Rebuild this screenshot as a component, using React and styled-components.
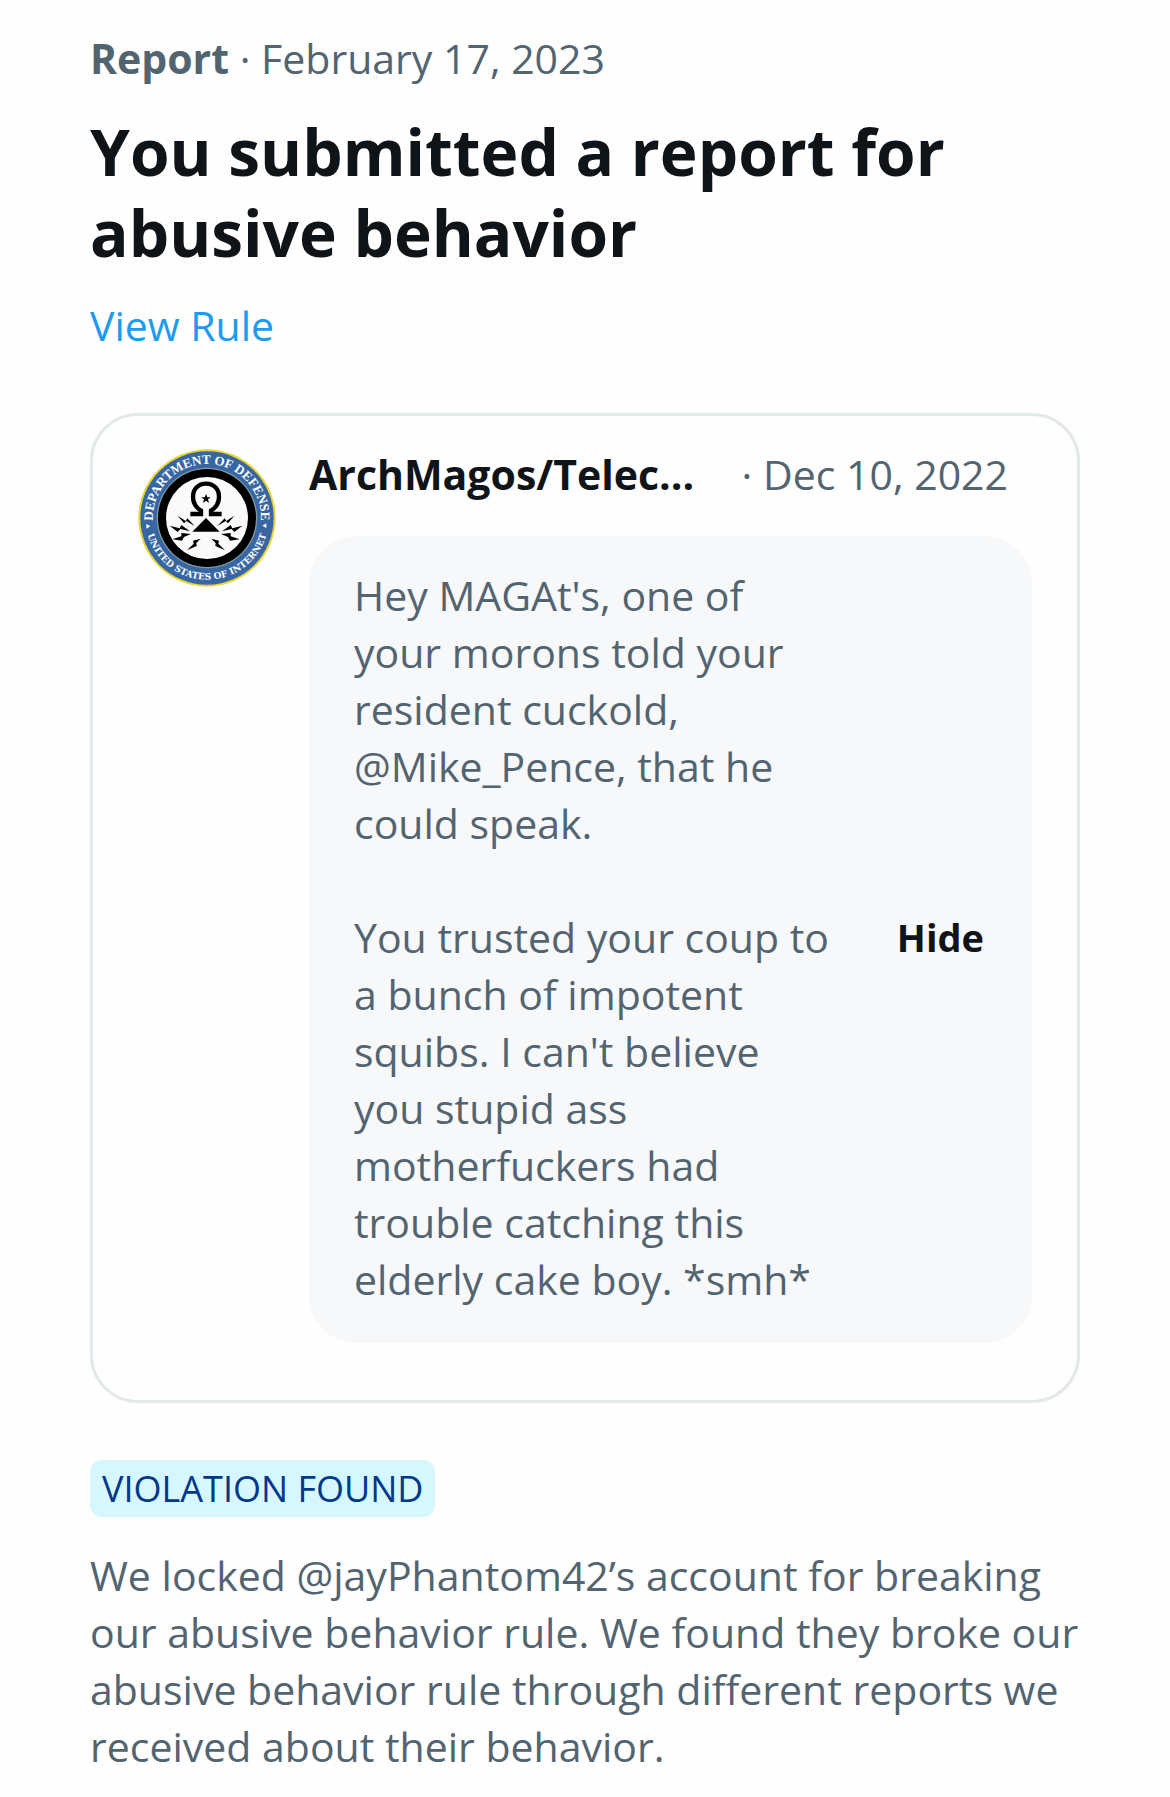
import { useState } from 'react';
import { createGlobalStyle, styled } from 'styled-components'


const bolts = [
    'M195 256 L173 233 L168 241 L144 225 L163 248 L170 241 Z',
    'M181 272 L155 253 L150 263 L120 255 L144 274 L152 265 Z',
    'M184 280 L155 277 L155 287 L128 296 L157 300 L163 289 Z',
    'M213 294 L190 300 L192 309 L172 329 L201 316 L200 307 Z',
]

const Seal = () => {
    return (
        <SealStyle viewBox="25 25 414 414" role="img" aria-label="Profile photo">
            <defs>
                <path id="seal-top" d="M71 250 A162 162 0 1 1 393 250" />
                <path id="seal-bottom" d="M47 232 A185 185 0 0 0 417 232" />
            </defs>
            <circle cx="232" cy="232" r="206" fill="#e9d534" />
            <circle cx="232" cy="232" r="200" fill="#3766a3" />
            <circle cx="232" cy="232" r="151" fill="#7d9ba0" />
            <circle cx="232" cy="232" r="147" fill="#000" />
            <circle cx="232" cy="232" r="123" fill="#fafafa" />
            <text className="top"><textPath href="#seal-top" startOffset="50%" textAnchor="middle">DEPARTMENT OF DEFENSE</textPath></text>
            <text className="bottom"><textPath href="#seal-bottom" startOffset="50%" textAnchor="middle">UNITED STATES OF INTERNET</textPath></text>
            <path d="M50 250 L62 257 L50 264 Z M410 248 L398 255 L410 262 Z" fill="#fff" />
            <path d="M182 220 H214 V210 C198 200 190 184 190 168 C190 145 206 129 229 129 C252 129 268 145 268 168 C268 184 260 200 244 210 V220 H276" fill="none" stroke="#000" strokeWidth="13" />
            <path d="M229 160 L233 170 L243 170 L235 176 L238 187 L229 180 L220 187 L223 176 L215 170 L225 170 Z" />
            <path d="M229 232 L270 273 H188 Z" />
            {bolts.map(d => <path key={d} d={d} />)}
            <g transform="translate(458 0) scale(-1 1)">
                {bolts.map(d => <path key={d} d={d} />)}
            </g>
        </SealStyle>
    )
}


const App = () => {
    const [ hidden, setHidden ] = useState(false)

    return (
        <>
            <GlobalStyle />
            <Page>
                <Meta><strong>Report</strong> · February 17, 2023</Meta>
                <Title>You submitted a report for abusive behavior</Title>
                <RuleLink href="#rule">View Rule</RuleLink>
                <Card>
                    <Seal />
                    <Post>
                        <PostHeader>
                            <Author>ArchMagos/Telec...</Author>
                            <PostDate>· Dec 10, 2022</PostDate>
                        </PostHeader>
                        <Bubble>
                            <PostText $hidden={hidden}>
                                {`Hey MAGAt's, one of your morons told your resident cuckold, @Mike_Pence, that he could speak.\n\nYou trusted your coup to a bunch of impotent squibs. I can't believe you stupid ass motherfuckers had trouble catching this elderly cake boy. *smh*`}
                            </PostText>
                            <ToggleButton type="button" onClick={()=>setHidden(!hidden)}>
                                { hidden ? 'View' : 'Hide' }
                            </ToggleButton>
                        </Bubble>
                    </Post>
                </Card>
                <Badge>VIOLATION FOUND</Badge>
                <Outcome>
                    We locked @jayPhantom42’s account for breaking our abusive behavior rule. We found they broke our abusive behavior rule through different reports we received about their behavior.
                </Outcome>
            </Page>
        </>
    )
}

const GlobalStyle = createGlobalStyle`
    :root {
        --text-color: #0f1419;
        --muted-color: #536471;
        --link-color: #1d9bf0;
        --border-color: #e3e8eb;
    }
    * {
        box-sizing: border-box;
    }
    body {
        margin: 0;
        background: #fefefe;
        color: var(--muted-color);
        font-family: "Open Sans", "Liberation Sans", sans-serif;
        font-size: 41px;
        line-height: 57px;
    }
`

const Page = styled.main`
    display: flex;
    flex-direction: column;
    align-items: flex-start;
    padding: 30px 90px 20px;
`

const Meta = styled.p`
    margin: 0 0 24px;
`

const Title = styled.h1`
    margin: 0 0 24px;
    color: var(--text-color);
    font-size: 64px;
    font-weight: 700;
    line-height: 81px;
`

const RuleLink = styled.a`
    color: var(--link-color);
    text-decoration: none;
    &:hover {
        text-decoration: underline;
    }
`

const Card = styled.article`
    display: flex;
    align-items: flex-start;
    gap: 33px;
    width: 100%;
    margin: 59px 0 57px;
    padding: 30px 45px 57px;
    border: 3px solid var(--border-color);
    border-radius: 48px;
`

const SealStyle = styled.svg`
    flex: none;
    width: 138px;
    height: 138px;
    margin-top: 3px;
    text {
        fill: #fff;
        font-weight: bold;
    }
    .top {
        font-family: "Liberation Serif", serif;
        font-size: 39px;
    }
    .bottom {
        font-family: "DejaVu Serif", serif;
        font-size: 27px;
    }
`

const Post = styled.div`
    flex: 1;
    min-width: 0;
`

const PostHeader = styled.header`
    display: flex;
    justify-content: space-between;
    margin-bottom: 33px;
    padding-right: 24px;
`

const Author = styled.strong`
    color: var(--text-color);
    white-space: nowrap;
`

const PostDate = styled.span`
    flex: none;
`

const Bubble = styled.div`
    display: flex;
    align-items: center;
    gap: 66px;
    padding: 31px 48px 35px 45px;
    border-radius: 48px;
    background: #f7f8fa;
`

const PostText = styled.p`
    flex: 1;
    margin: 0;
    white-space: pre-line;
    visibility: ${props => props.$hidden ? 'hidden' : 'visible'};
`

const ToggleButton = styled.button`
    flex: none;
    padding: 0;
    border: 0;
    background: none;
    color: var(--text-color);
    font: inherit;
    font-size: 38px;
    font-weight: 700;
    cursor: pointer;
`

const Badge = styled.span`
    padding: 0 12px;
    border-radius: 12px;
    background: #d7f7ff;
    color: #00388a;
    font-size: 36px;
`

const Outcome = styled.p`
    margin: 30px 0 0;
`


export default App
